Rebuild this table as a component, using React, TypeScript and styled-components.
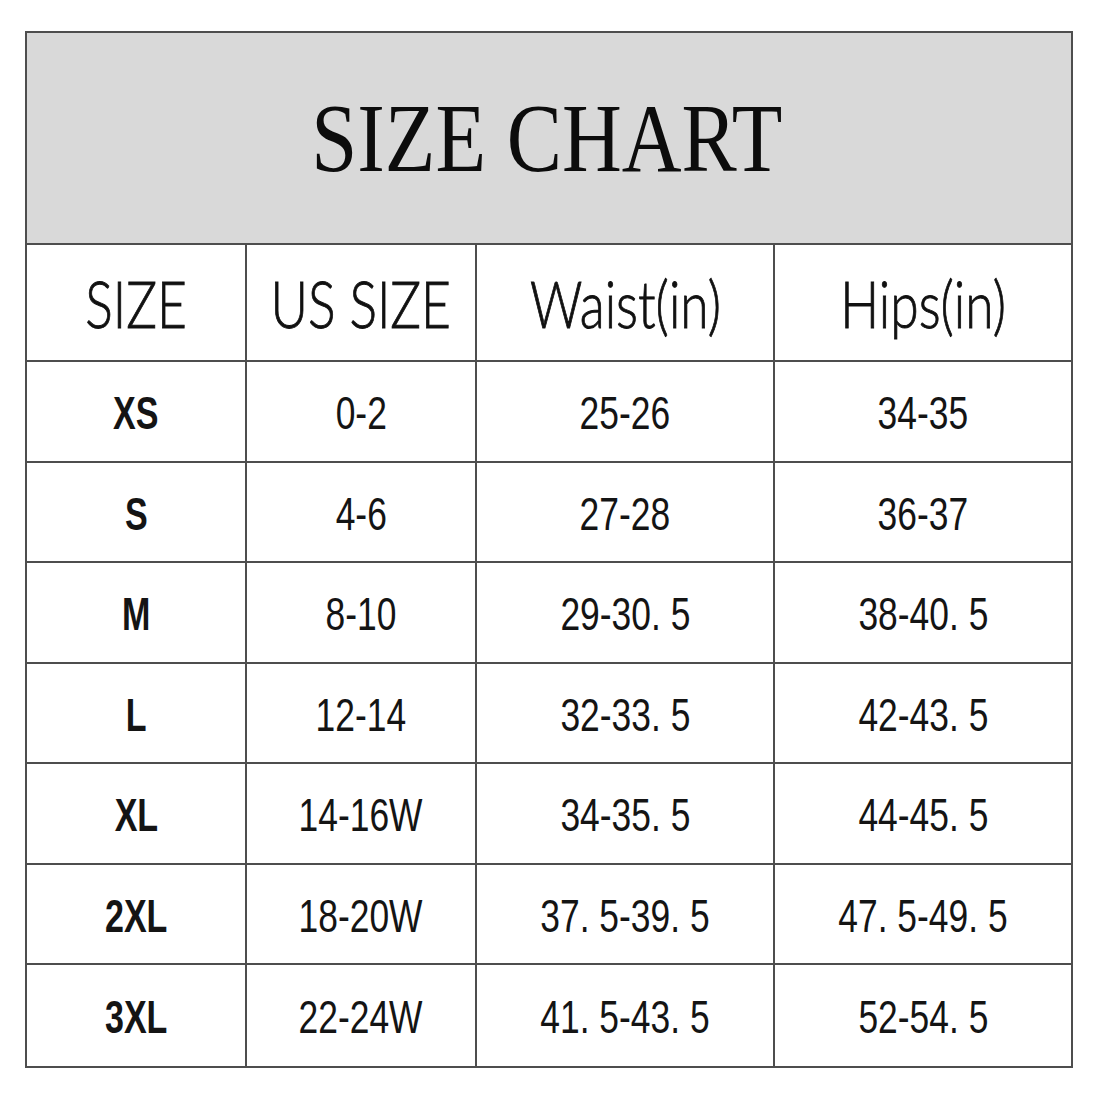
import React from "react";
import styled, { createGlobalStyle } from "styled-components";

const GlobalStyle = createGlobalStyle`
    html, body {
        margin: 0;
        padding: 0;
        background: #ffffff;
    }
`;

const rows = [
    ["XS", "0-2", "25-26", "34-35"],
    ["S", "4-6", "27-28", "36-37"],
    ["M", "8-10", "29-30. 5", "38-40. 5"],
    ["L", "12-14", "32-33. 5", "42-43. 5"],
    ["XL", "14-16W", "34-35. 5", "44-45. 5"],
    ["2XL", "18-20W", "37. 5-39. 5", "47. 5-49. 5"],
    ["3XL", "22-24W", "41. 5-43. 5", "52-54. 5"],
];

const headers = ["SIZE", "US SIZE", "Waist(in)", "Hips(in)"];

const App = () => {
    return (
        <>
            <GlobalStyle />
            <Page>
                <Chart>
                    <TitleBar>
                        <Title>SIZE CHART</Title>
                    </TitleBar>
                    <Grid>
                        {headers.map((h, i) => (
                            <HeadCell key={h} $last={i === 3}>
                                <HeadText>{h}</HeadText>
                            </HeadCell>
                        ))}
                        {rows.map((row, r) =>
                            row.map((value, c) => (
                                <Cell key={`${r}-${c}`} $last={c === 3} $bottom={r === rows.length - 1}>
                                    <CellText $bold={c === 0}>{value}</CellText>
                                </Cell>
                            ))
                        )}
                    </Grid>
                </Chart>
            </Page>
        </>
    );
};

const Page = styled.div`
    width: 1100px;
    height: 1100px;
    padding: 31px 0 0 25px;
    box-sizing: border-box;
    background: #ffffff;
`;

const Chart = styled.div`
    width: 1048px;
    box-sizing: border-box;
    border: 2px solid #4e4e4e;
`;

const TitleBar = styled.div`
    height: 210px;
    background: #d9d9d9;
    border-bottom: 2px solid #4e4e4e;
    display: flex;
    align-items: center;
    justify-content: center;
`;

const Title = styled.span`
    display: inline-block;
    font-family: "Liberation Serif", "Times New Roman", serif;
    font-size: 98px;
    color: #0c0c0c;
    transform: scaleX(0.845);
    margin-left: -4px;
    white-space: nowrap;
`;

const Grid = styled.div`
    display: grid;
    grid-template-columns: 220px 230px 298px 296px;
    grid-template-rows: 117px repeat(7, 100.5px);
`;

const HeadCell = styled.div<{ $last?: boolean }>`
    display: flex;
    align-items: center;
    justify-content: center;
    border-right: ${(p) => (p.$last ? "none" : "2px solid #4e4e4e")};
    border-bottom: 2px solid #4e4e4e;
    box-sizing: border-box;
`;

const HeadText = styled.span`
    display: inline-block;
    font-family: Lato, "Open Sans", sans-serif;
    font-weight: 300;
    font-size: 66px;
    color: #111111;
    -webkit-text-stroke: 0.9px #111111;
    transform: scaleX(0.78);
    white-space: nowrap;
`;

const Cell = styled.div<{ $last?: boolean; $bottom?: boolean }>`
    display: flex;
    align-items: center;
    justify-content: center;
    border-right: ${(p) => (p.$last ? "none" : "2px solid #4e4e4e")};
    border-bottom: ${(p) => (p.$bottom ? "none" : "2px solid #4e4e4e")};
    box-sizing: border-box;
`;

const CellText = styled.span<{ $bold?: boolean }>`
    display: inline-block;
    font-family: "Liberation Sans", Arial, sans-serif;
    font-weight: ${(p) => (p.$bold ? 700 : 400)};
    font-size: 46px;
    color: #141414;
    transform: scaleX(${(p) => (p.$bold ? 0.74 : 0.77)});
    white-space: nowrap;
    margin-top: 4px;
`;

export default App;
